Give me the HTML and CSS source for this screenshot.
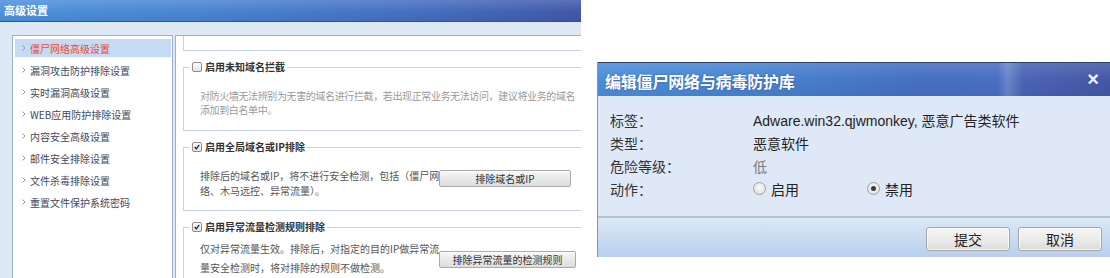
FILE: index.html
```html
<!DOCTYPE html>
<html lang="zh-CN">
<head>
<meta charset="utf-8">
<title>高级设置</title>
<link rel="stylesheet" href="styles.css">
</head>
<body>
<div class="stage">
  <section class="win">
    <header class="win-title">高级设置</header>
    <div class="win-body">
      <nav class="side">
        <div class="side-item active"><svg class="chev" viewBox="0 0 4 6"><polyline points="0.5,0.5 3,3 0.5,5.5"/></svg>僵尸网络高级设置</div>
        <div class="side-item"><svg class="chev" viewBox="0 0 4 6"><polyline points="0.5,0.5 3,3 0.5,5.5"/></svg>漏洞攻击防护排除设置</div>
        <div class="side-item"><svg class="chev" viewBox="0 0 4 6"><polyline points="0.5,0.5 3,3 0.5,5.5"/></svg>实时漏洞高级设置</div>
        <div class="side-item"><svg class="chev" viewBox="0 0 4 6"><polyline points="0.5,0.5 3,3 0.5,5.5"/></svg>WEB应用防护排除设置</div>
        <div class="side-item"><svg class="chev" viewBox="0 0 4 6"><polyline points="0.5,0.5 3,3 0.5,5.5"/></svg>内容安全高级设置</div>
        <div class="side-item"><svg class="chev" viewBox="0 0 4 6"><polyline points="0.5,0.5 3,3 0.5,5.5"/></svg>邮件安全排除设置</div>
        <div class="side-item"><svg class="chev" viewBox="0 0 4 6"><polyline points="0.5,0.5 3,3 0.5,5.5"/></svg>文件杀毒排除设置</div>
        <div class="side-item"><svg class="chev" viewBox="0 0 4 6"><polyline points="0.5,0.5 3,3 0.5,5.5"/></svg>重置文件保护系统密码</div>
      </nav>
      <div class="content">
        <div class="fs fs-tail"></div>
        <fieldset class="fs">
          <legend><span class="cb"></span>启用未知域名拦截</legend>
          <div class="fs-body fs-body-a">
            <p class="desc muted">对防火墙无法辨别为无害的域名进行拦截，若出现正常业务无法访问，建议将业务的域名<br>添加到白名单中。</p>
          </div>
        </fieldset>
        <fieldset class="fs">
          <legend><span class="cb checked"><svg viewBox="0 0 10 10"><polyline points="2.2,5 4.2,7.2 7.8,2.4"/></svg></span>启用全局域名或IP排除</legend>
          <div class="fs-body fs-body-b">
            <p class="desc">排除后的域名或IP，将不进行安全检测，包括（僵尸网<br>络、木马远控、异常流量）。</p>
            <button class="btn-sm btn-a">排除域名或IP</button>
          </div>
        </fieldset>
        <fieldset class="fs">
          <legend><span class="cb checked"><svg viewBox="0 0 10 10"><polyline points="2.2,5 4.2,7.2 7.8,2.4"/></svg></span>启用异常流量检测规则排除</legend>
          <div class="fs-body fs-body-c">
            <p class="desc">仅对异常流量生效。排除后，对指定的目的IP做异常流<br>量安全检测时，将对排除的规则不做检测。</p>
            <button class="btn-sm btn-b">排除异常流量的检测规则</button>
          </div>
        </fieldset>
      </div>
    </div>
  </section>

  <section class="dlg">
    <header class="dlg-title">
      <span class="dlg-title-text">编辑僵尸网络与病毒防护库</span>
      <span class="dlg-close">×</span>
    </header>
    <div class="dlg-body">
      <div class="row"><span class="lbl">标签：</span><span class="val"><span class="latin">Adware.win32.qjwmonkey, </span>恶意广告类软件</span></div>
      <div class="row"><span class="lbl">类型：</span><span class="val">恶意软件</span></div>
      <div class="row"><span class="lbl">危险等级：</span><span class="val low">低</span></div>
      <div class="row"><span class="lbl">动作：</span>
        <span class="val radios">
          <span class="opt"><span class="radio"></span>启用</span>
          <span class="opt"><span class="radio on"></span>禁用</span>
        </span>
      </div>
    </div>
    <footer class="dlg-foot">
      <button class="btn">提交</button>
      <button class="btn">取消</button>
    </footer>
  </section>
</div>
</body>
</html>
```

FILE: styles.css
```css
* { box-sizing: border-box; margin: 0; padding: 0; }
html, body { width: 1110px; height: 278px; overflow: hidden; background: #fff; }
body { font-family: "Noto Sans CJK SC", "Liberation Sans", sans-serif; color: #333; }

.stage { display: flex; align-items: flex-start; height: 278px; }

/* ---------- left window ---------- */
.win { width: 581px; height: 278px; flex: none; display: flex; flex-direction: column; overflow: hidden; }
.win-title {
  height: 22px; flex: none;
  background:
    linear-gradient(to bottom, rgba(255,255,255,.14), rgba(255,255,255,0) 55%, rgba(0,0,0,.06)),
    linear-gradient(to right, #4d92dc, #4a84d2 35%, #4670c2 70%, #4159aa);
  border-bottom: 1px solid #34528f;
  color: #fff; font-weight: bold; font-size: 11px; line-height: 21px; padding-left: 4px;
}
.win-body { flex: 1; display: flex; background: #dfe8f5; padding: 13px 0 0 12px; min-height: 0; }

.side { width: 161px; flex: none; background: #fff; border: 1px solid #9bb1d1; border-bottom: none; padding-top: 3px; }
.side-item {
  height: 18px; margin: 0 1px 4px 2px; padding-left: 7px;
  display: flex; align-items: center;
  font-size: 10px; color: #3c4a60; white-space: nowrap;
}
.side-item.active { background: #c6daf3; color: #ec4a32; }
.chev { width: 4px; height: 6px; margin-right: 4px; flex: none; fill: none; stroke: #8f9db2; stroke-width: 1; }

.content { flex: 1; margin-left: 2px; background: #fff; border-left: 1px solid #9bb1d1; border-top: 1px solid #9bb1d1; padding-left: 7px; overflow: hidden; }

.fs { width: 440px; border: 1px solid #c6d3e5; }
.fs-tail { height: 15px; border-top: none; }
fieldset.fs { margin-top: 9px; padding: 0; min-width: 0; }
fieldset.fs legend {
  margin-left: 6px; padding: 0 2px; height: 14px; line-height: 14px;
  font-size: 10px; font-weight: bold; color: #333;
  display: flex; align-items: center;
}
.cb {
  width: 10px; height: 10px; margin-right: 3px; flex: none;
  border: 1px solid #8e8e8e; border-radius: 2px;
  background: linear-gradient(#fdfdfd, #e2e2e2);
  display: inline-flex;
}
.cb svg { width: 8px; height: 8px; fill: none; stroke: #222; stroke-width: 1.6; }

.fs-body { padding-left: 16px; }
.fs-body-a { padding-top: 15px; padding-bottom: 13px; }
.fs-body-b { padding-top: 14px; padding-bottom: 12px; display: flex; align-items: flex-start; }
.fs-body-c { padding-top: 5px; padding-bottom: 10px; display: flex; align-items: flex-start; }

.desc { font-size: 10px; line-height: 14px; color: #555; white-space: nowrap; }
.desc.muted { color: #999; letter-spacing: -0.38px; }
.fs-body-b .desc { width: 239px; line-height: 15px; }
.fs-body-c .desc { width: 239px; line-height: 19px; }

.btn-sm {
  height: 17px; font-family: inherit; font-size: 10px; color: #333;
  border: 1px solid #a9a9a9; border-radius: 2px;
  background: linear-gradient(#f7f7f7, #e9e9e9 50%, #dedede);
  box-shadow: inset 0 1px 0 #fff;
}
.btn-a { width: 132px; margin-top: 2px; }
.btn-b { width: 137px; margin-top: 12px; }

/* ---------- dialog ---------- */
.dlg { width: 513px; flex: none; margin: 62px 0 0 16px; display: flex; flex-direction: column; border-left: 1px solid #8593aa; }
.dlg-title {
  height: 34px; border-top: 1px solid #2e4268;
  background:
    linear-gradient(to bottom, rgba(255,255,255,.12), rgba(255,255,255,0) 50%, rgba(0,0,0,.05)),
    linear-gradient(to right, #4b8edb, #4781cf 35%, #4670c2 62%, #4a6ec4 78%, #6a86cc 80%, #4a64b4 83%, #4457a8);
  display: flex; align-items: center; justify-content: space-between;
  padding: 2px 11px 0 7px; color: #fff;
}
.dlg-title-text { font-size: 16px; font-weight: bold; text-shadow: 0 0 2px rgba(0,0,40,.35); letter-spacing: -0.2px; }
.dlg-close { font-family: "Liberation Sans", sans-serif; font-size: 20px; line-height: 20px; font-weight: bold; color: #eef2fa; margin-top: -3px; }

.dlg-body { height: 122px; background: #dfe8f6; border-bottom: 2px solid #b3c0d2; padding: 12px 0 0 12px; }
.row { height: 23px; display: flex; align-items: center; font-size: 14px; color: #333; }
.lbl { width: 143px; flex: none; }
.val { color: #222; white-space: nowrap; }
.latin { font-family: "Liberation Sans", sans-serif; }
.low { color: #7a7a7a; }
.radios { display: flex; }
.opt { display: flex; align-items: center; width: 114px; }
.radio {
  width: 13px; height: 13px; border-radius: 50%; margin-right: 5px; flex: none;
  border: 1px solid #a2a2a2;
  background: radial-gradient(circle at 50% 40%, #fafafa, #dadada);
  display: inline-flex; align-items: center; justify-content: center;
}
.radio.on::after { content: ""; width: 5px; height: 5px; border-radius: 50%; background: #3a3a3a; }

.dlg-foot { height: 39px; background: linear-gradient(#dbe8f6, #b8cfee); display: flex; justify-content: flex-end; gap: 8px; padding: 9px 8px 0 0; }
.btn {
  width: 84px; height: 24px; font-family: inherit; font-size: 14px; color: #222;
  border: 1px solid #a6a6a6; border-radius: 3px;
  background: linear-gradient(#f6f6f6, #ebebeb 50%, #dcdcdc);
  box-shadow: inset 0 0 0 1px rgba(255,255,255,.7);
}
```
